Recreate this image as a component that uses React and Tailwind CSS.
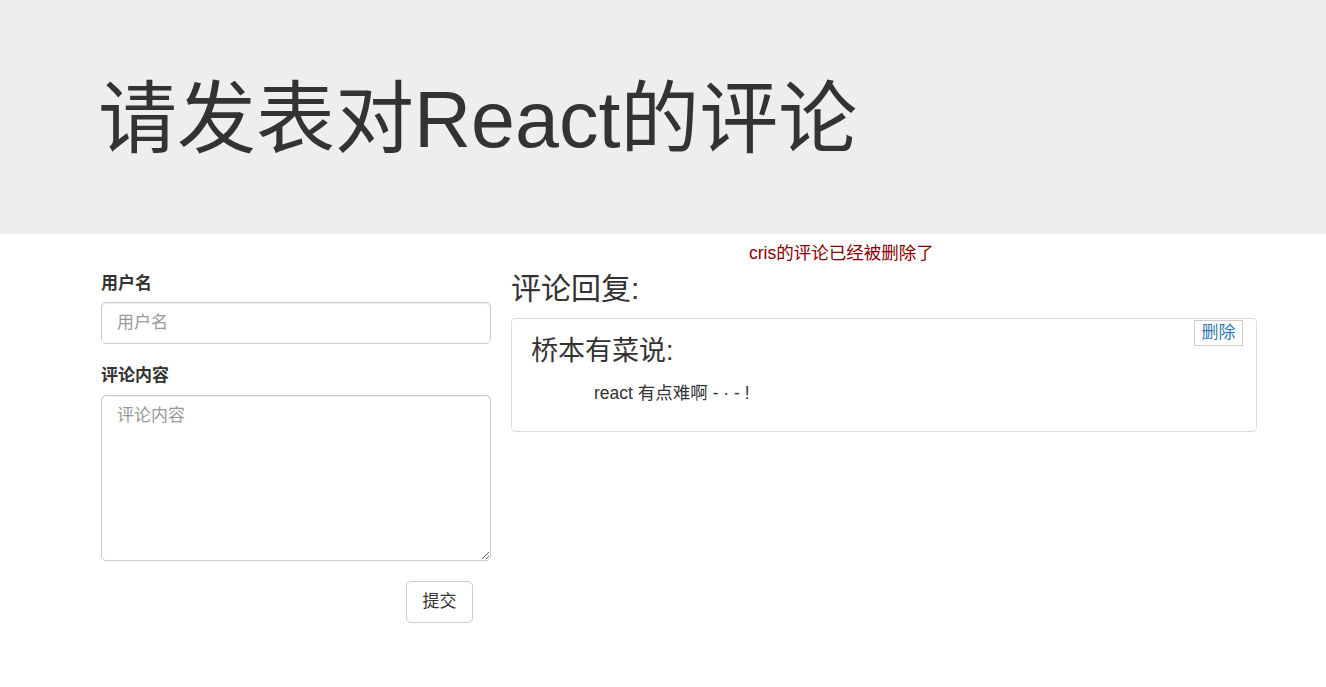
export default function App() {
  const font = { fontFamily: '"Liberation Sans", "Noto Sans CJK SC", sans-serif' };
  return (
    <div className="min-h-[687px] bg-white text-[#333333]" style={font}>
      <div className="h-[234px] bg-[#eeeeee] flex items-center pl-[98px] pt-[6px]">
        <h1 className="text-[79px] leading-[1.1] font-normal text-[#333333] m-0">请发表对React的评论</h1>
      </div>
      <div className="pl-[101px]">
        <div className="h-[38px] pl-[648px] text-[17.5px] leading-[38px] text-[#8b0000]">cris的评论已经被删除了</div>
        <div className="flex gap-[20px]">
          <div className="w-[390px] flex flex-col">
            <label className="text-[17px] leading-[24px] font-bold mb-[6px]">用户名</label>
            <input
              className="h-[42px] w-full border border-[#cccccc] rounded-[5px] px-[15px] text-[17px] placeholder:text-[#999999] outline-none shadow-[inset_0_1px_1px_rgba(0,0,0,0.075)]"
              placeholder="用户名"
            />
            <label className="text-[17px] leading-[24px] font-bold mt-[20px] mb-[7px]">评论内容</label>
            <textarea
              className="h-[166px] w-full border border-[#cccccc] rounded-[5px] px-[15px] py-[8px] text-[17px] leading-[24px] placeholder:text-[#999999] outline-none shadow-[inset_0_1px_1px_rgba(0,0,0,0.075)]"
              placeholder="评论内容"
            />
            <div className="flex justify-end pr-[18px] mt-[20px]">
              <button className="h-[42px] w-[67px] border border-[#cccccc] rounded-[5px] bg-white text-[17px] text-[#333333]">提交</button>
            </div>
          </div>
          <div className="w-[746px] flex flex-col">
            <h2 className="text-[30px] leading-[30px] font-normal m-0 mt-[2px] mb-[14px]">评论回复:</h2>
            <div className="relative border border-[#dddddd] rounded-[4px] pt-[17px] pb-[26px] pl-[19px]">
              <h3 className="text-[27px] leading-[30px] font-normal m-0">桥本有菜说:</h3>
              <p className="mt-[15px] pl-[63px] text-[17.5px] leading-[24px] text-[#333333]">react 有点难啊 - · - !</p>
              <button className="absolute top-[1px] right-[13px] h-[26px] w-[49px] border border-[#cccccc] bg-white text-[17px] leading-[24px] text-[#337ab7]">删除</button>
            </div>
          </div>
        </div>
      </div>
    </div>
  );
}
